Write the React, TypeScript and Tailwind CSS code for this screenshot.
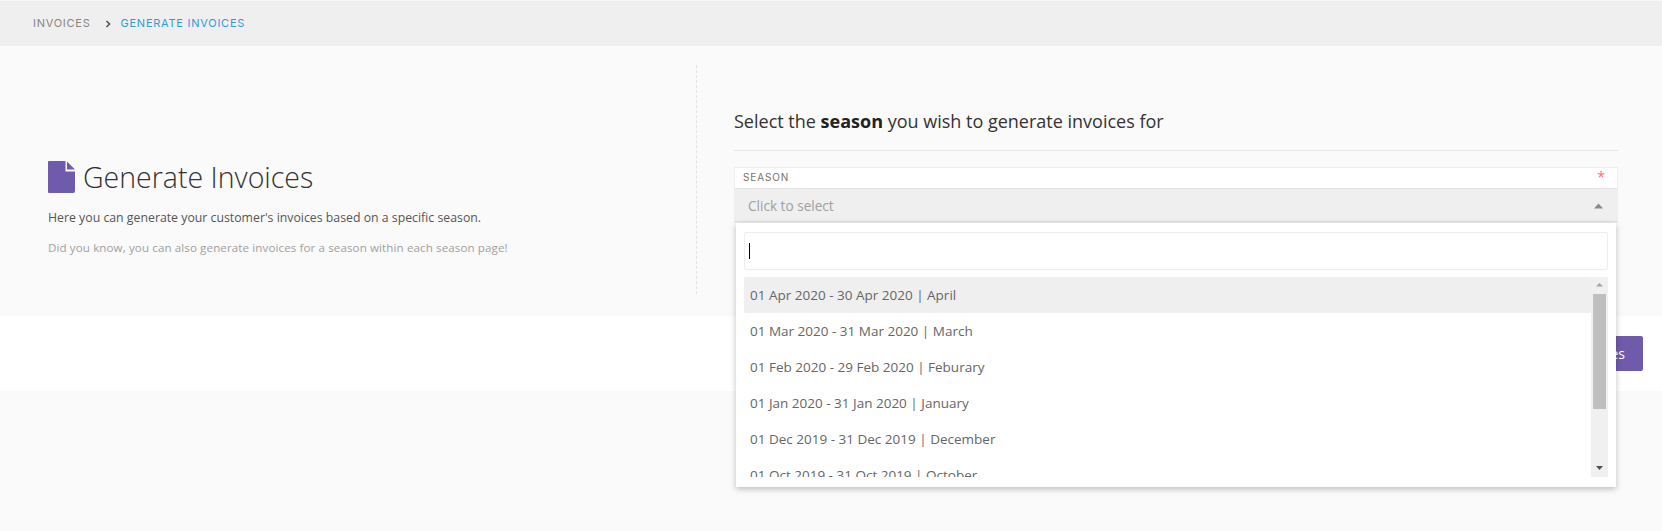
const seasons = [
  '01 Apr 2020 - 30 Apr 2020 | April',
  '01 Mar 2020 - 31 Mar 2020 | March',
  '01 Feb 2020 - 29 Feb 2020 | Feburary',
  '01 Jan 2020 - 31 Jan 2020 | January',
  '01 Dec 2019 - 31 Dec 2019 | December',
  '01 Oct 2019 - 31 Oct 2019 | October',
];

function FileIcon() {
  return (
    <svg width="27" height="32" viewBox="0 0 27 32" className="shrink-0">
      <path d="M1 0H17.5V10.5H27V30a2 2 0 0 1-2 2H1a1 1 0 0 1-1-1V1a1 1 0 0 1 1-1Z" fill="#6f5aab" />
      <path d="M19 0.5L27 8.5H19Z" fill="#6f5aab" />
    </svg>
  );
}

function SeasonDropdown() {
  return (
    <div className="absolute left-[2px] top-[56px] z-10 h-[264px] w-[880px] bg-white shadow-[0_2px_6px_rgba(0,0,0,0.25)] px-[8px] pt-[9px]">
      <div className="h-[38px] border border-[#eeeeee] rounded-[2px] bg-white flex items-center px-[4px]">
        <div className="w-px h-[16px] bg-black" />
      </div>
      <div className="mt-[7px] h-[200px] flex overflow-hidden">
        <ul className="flex-1 min-w-0">
          {seasons.map((s, i) => (
            <li
              key={s}
              className={`h-[36px] flex items-center pl-[6px] pt-[1px] text-[13.5px] text-[#666666] rounded-[2px] ${i === 0 ? 'bg-[#efefef]' : ''}`}
            >
              {s}
            </li>
          ))}
        </ul>
        <div className="w-[17px] h-[200px] bg-[#f0f0f0] flex flex-col items-center">
          <svg width="17" height="17" viewBox="0 0 17 17" className="shrink-0">
            <path d="M8.5 6L12 9.5H5Z" fill="#a3a3a3" />
          </svg>
          <div className="w-[13px] h-[115px] bg-[#bfbfbf]" />
          <div className="flex-1" />
          <svg width="17" height="17" viewBox="0 0 17 17" className="shrink-0">
            <path d="M5 6H12L8.5 10Z" fill="#505050" />
          </svg>
        </div>
      </div>
    </div>
  );
}

export default function App() {
  return (
    <div className="min-h-[531px] bg-[#fafafa] font-['Open_Sans',sans-serif]">
      {/* Breadcrumb */}
      <div className="h-[46px] bg-[#efefef] border-t border-[#f7f7f7] flex items-center pl-[33px] font-['Inter',sans-serif] text-[11px] tracking-[0.75px]">
        <span className="text-[#8a8482]">INVOICES</span>
        <svg width="7" height="8" viewBox="0 0 7 8" className="ml-[14px] mr-[9px]">
          <path d="M1.5 1L4.5 4L1.5 7" fill="none" stroke="#555555" strokeWidth="1.6" />
        </svg>
        <span className="text-[#2f9ae0]">GENERATE INVOICES</span>
      </div>

      {/* Main panel */}
      <div className="h-[270px] flex">
        <div className="w-[697px] shrink-0 flex pt-[19px] pb-[22px]">
          <div className="flex-1 flex flex-col justify-center pl-[48px] pt-[55px]">
            <div className="flex items-center gap-[8px]">
              <FileIcon />
              <h1 className="text-[28.5px] font-light text-[#333333] leading-[36px]">Generate Invoices</h1>
            </div>
            <p className="mt-[14px] text-[12.3px] text-[#555555] leading-[18px]">
              Here you can generate your customer's invoices based on a specific season.
            </p>
            <p className="mt-[13px] text-[11.6px] text-[#a0a0a0] leading-[16px] tracking-[0.1px]">
              Did you know, you can also generate invoices for a season within each season page!
            </p>
          </div>
          <div className="border-r border-dashed border-[#e2e2e2]" />
        </div>

        <div className="flex-1 pl-[37px] pr-[44px]">
          <div className="h-[105px] border-b border-[#e6e6e6] flex items-end pb-[16px]">
            <h2 className="text-[18px] text-[#333333] leading-[26px]">
              Select the <strong className="font-bold text-[#222222]">season</strong> you wish to generate invoices for
            </h2>
          </div>
          <div className="relative mt-[16px]">
            <div className="border border-[#eeeeee] bg-white">
              <div className="h-[20px] flex items-center justify-between pl-[8px] pr-[12px] pb-[2px]">
                <span className="font-['Inter',sans-serif] text-[10px] tracking-[0.85px] text-[#7a706c]">SEASON</span>
                <span className="text-[14px] text-[#ff6b7a] leading-none">*</span>
              </div>
              <div className="h-[34px] bg-[#efefef] border-y border-[#e2e2e2] flex items-center justify-between pl-[13px] pr-[14px] pt-[2px]">
                <span className="text-[13.6px] text-[#a0a0a0]">Click to select</span>
                <svg width="9" height="6" viewBox="0 0 9 6">
                  <path d="M4.5 0.5L9 5.5H0Z" fill="#8a8a8a" />
                </svg>
              </div>
            </div>
            <SeasonDropdown />
          </div>
        </div>
      </div>

      {/* Actions */}
      <div className="h-[75px] bg-white flex items-center justify-end pr-[19px]">
        <button className="h-[35px] px-[18px] bg-[#6f5aab] rounded-[2px] text-white text-[14px]">
          Generate Invoices
        </button>
      </div>
    </div>
  );
}
